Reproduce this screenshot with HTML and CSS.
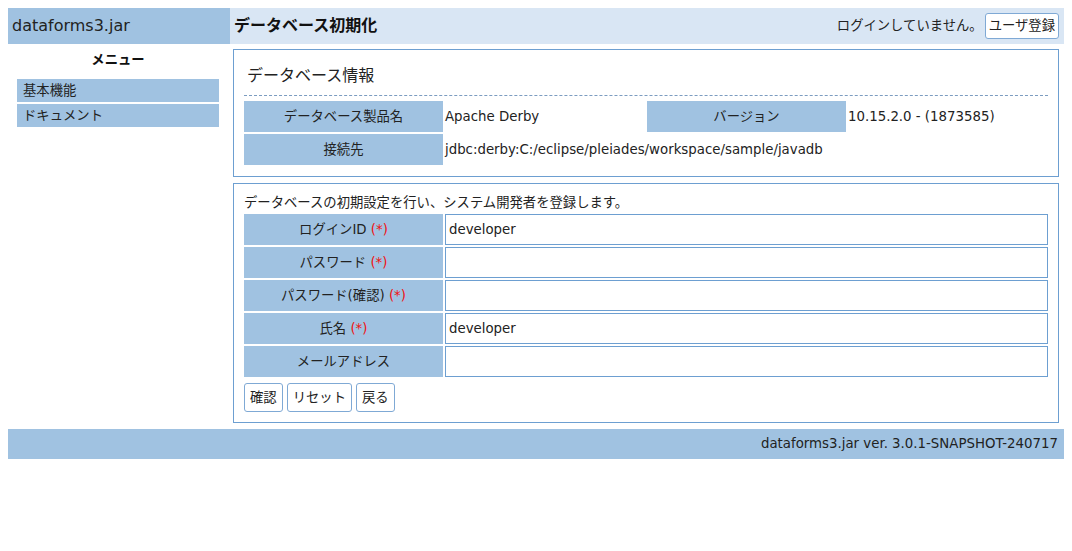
FILE: index.html
```html
<!DOCTYPE html>
<html lang="ja">
<head>
<meta charset="utf-8">
<title>データベース初期化</title>
<link rel="stylesheet" href="styles.css">
</head>
<body>
<header class="top">
  <div class="brand">dataforms3.jar</div>
  <div class="topbar">
    <h1 class="page-title">データベース初期化</h1>
    <div class="login">
      <span class="login-msg">ログインしていません。</span>
      <button class="btn btn-top" type="button">ユーザ登録</button>
    </div>
  </div>
</header>
<div class="layout">
  <nav class="side">
    <div class="side-title">メニュー</div>
    <ul class="menu">
      <li class="menu-item">基本機能</li>
      <li class="menu-item">ドキュメント</li>
    </ul>
  </nav>
  <main class="main">
    <section class="box">
      <h2 class="box-title">データベース情報</h2>
      <table class="info">
        <tr>
          <th class="label">データベース製品名</th>
          <td class="value">Apache Derby</td>
          <th class="label">バージョン</th>
          <td class="value">10.15.2.0 - (1873585)</td>
        </tr>
        <tr>
          <th class="label">接続先</th>
          <td class="value" colspan="3">jdbc:derby:C:/eclipse/pleiades/workspace/sample/javadb</td>
        </tr>
      </table>
    </section>
    <section class="box box-form">
      <p class="lead">データベースの初期設定を行い、システム開発者を登録します。</p>
      <table class="form">
        <tr>
          <th class="label">ログインID <span class="req">(*)</span></th>
          <td class="field"><input class="input" type="text" value="developer"></td>
        </tr>
        <tr>
          <th class="label">パスワード <span class="req">(*)</span></th>
          <td class="field"><input class="input" type="password" value=""></td>
        </tr>
        <tr>
          <th class="label">パスワード(確認) <span class="req">(*)</span></th>
          <td class="field"><input class="input" type="password" value=""></td>
        </tr>
        <tr>
          <th class="label">氏名 <span class="req">(*)</span></th>
          <td class="field"><input class="input" type="text" value="developer"></td>
        </tr>
        <tr>
          <th class="label">メールアドレス</th>
          <td class="field"><input class="input" type="text" value=""></td>
        </tr>
      </table>
      <div class="actions">
        <button class="btn" type="button">確認</button>
        <button class="btn" type="button">リセット</button>
        <button class="btn" type="button">戻る</button>
      </div>
    </section>
  </main>
</div>
<footer class="foot">dataforms3.jar ver. 3.0.1-SNAPSHOT-240717</footer>
</body>
</html>
```
FILE: styles.css
```css
* { box-sizing: border-box; }

body {
  margin: 8px;
  font-family: "DejaVu Sans", "Noto Sans CJK JP", sans-serif;
  font-size: 13.33px;
  line-height: 20px;
  color: #222;
  background: #fff;
}

.top {
  display: flex;
  height: 36px;
}

.brand {
  width: 222px;
  flex: none;
  background: #a0c2e1;
  font-size: 16px;
  line-height: 36px;
  padding-left: 4px;
  color: #222;
}

.topbar {
  flex: 1;
  display: flex;
  align-items: center;
  justify-content: space-between;
  background: #d9e6f4;
  padding: 0 5px 0 4px;
}

.page-title {
  margin: 0;
  font-size: 16px;
  font-weight: bold;
  line-height: 20px;
  color: #111;
}

.login {
  display: flex;
  align-items: center;
  gap: 2px;
}

.btn {
  font-family: "DejaVu Sans", "Noto Sans CJK JP", sans-serif;
  font-size: 13.33px;
  color: #222;
  background: #fff;
  border: 1px solid #7fa9d5;
  border-radius: 3px;
  height: 29px;
  padding: 0 5px;
  margin: 0;
  line-height: 20px;
}

.btn-top {
  height: 26px;
  padding: 0 3px;
}

.layout {
  display: flex;
}

.side {
  width: 222px;
  flex: none;
  padding: 6px 11px 0 9px;
}

.side-title {
  text-align: center;
  font-weight: bold;
  line-height: 20px;
  margin-bottom: 9px;
  color: #111;
}

.menu {
  list-style: none;
  margin: 0;
  padding: 0;
}

.menu-item {
  background: #a0c2e1;
  height: 23px;
  line-height: 23px;
  padding-left: 6px;
  margin-bottom: 2px;
}

.main {
  flex: 1;
  padding: 5px 5px 6px 3px;
}

.box {
  border: 1px solid #6d9fd1;
  padding: 8px 8px 9px;
  margin-bottom: 6px;
}

.box:last-child { margin-bottom: 0; }

.box-title {
  margin: 0 2px;
  padding: 8px 3px 9px;
  font-size: 16px;
  font-weight: normal;
  line-height: 20px;
  border-bottom: 1px dashed #7c9cc0;
  color: #222;
}

.info, .form {
  width: 100%;
  border-collapse: separate;
  border-spacing: 2px;
  table-layout: fixed;
}

.info { margin-top: 3px; }

.label {
  background: #a0c2e1;
  font-weight: normal;
  text-align: center;
  height: 31px;
  padding: 0;
  width: 199px;
  color: #222;
}

.value {
  padding: 0;
  height: 31px;
}

.form .label { width: 199px; }

.field {
  padding: 0;
  height: 31px;
}

.input {
  display: block;
  width: 100%;
  height: 31px;
  margin: 0;
  border: 1px solid #6d9fd1;
  padding: 0 3px;
  font-family: "DejaVu Sans", "Noto Sans CJK JP", sans-serif;
  font-size: 13.33px;
  color: #222;
  background: #fff;
  outline: none;
}

.req { color: #f01010; }

.box-form { padding-bottom: 10px; }

.lead {
  margin: 0 2px;
  padding-top: 2px;
  line-height: 18px;
}

.actions {
  display: flex;
  gap: 4px;
  margin: 4px 2px 0;
}

.foot {
  background: #a0c2e1;
  height: 30px;
  line-height: 30px;
  text-align: right;
  padding-right: 6px;
  color: #222;
}
```
